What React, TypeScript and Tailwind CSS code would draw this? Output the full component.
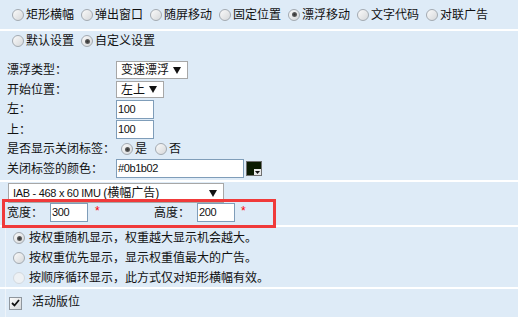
const font = "font-['Liberation_Sans','Noto_Sans_CJK_SC',sans-serif]";

const Radio = ({ checked = false, disabled = false }: { checked?: boolean; disabled?: boolean }) => (
    <span
        className={`inline-flex h-[12px] w-[12px] shrink-0 items-center justify-center rounded-full border ${
            disabled
                ? "border-[#d3d9df] bg-[#eef1f4]"
                : "border-[#a3aab1] bg-linear-to-br from-[#fafafa] to-[#d6d8da]"
        }`}
    >
        {checked && <span className="h-[5px] w-[5px] rounded-full bg-radial from-[#333] to-[#777]" />}
    </span>
);

const Option = ({ label, checked, disabled }: { label: string; checked?: boolean; disabled?: boolean }) => (
    <span className="flex items-center">
        <Radio checked={checked} disabled={disabled} />
        <span className="ml-[2px]">{label}</span>
    </span>
);

const Arrow = () => (
    <svg width="8" height="7" viewBox="0 0 8 7" className="shrink-0">
        <path d="M0 0H8L4 7Z" fill="#111" />
    </svg>
);

const Select = ({ text, width, height }: { text: string; width: string; height: string }) => (
    <div className={`flex items-center justify-between border border-[#a7a7a7] bg-white pl-[4px] pr-[6px] ${width} ${height}`}>
        <span className="whitespace-nowrap">{text}</span>
        <Arrow />
    </div>
);

const TextBox = ({ value, width = "w-[38px]" }: { value: string; width?: string }) => (
    <div className={`flex h-[19px] items-center border border-[#7f9db9] bg-white pl-[1px] text-[11px] tracking-[-0.4px] ${width}`}>
        {value}
    </div>
);

const FormRow = ({ label, h, children }: { label: string; h: string; children: React.ReactNode }) => (
    <div className={`flex items-center ${h}`}>
        <span className="w-[109px] shrink-0">{label}</span>
        {children}
    </div>
);

const types = ["矩形横幅", "弹出窗口", "随屏移动", "固定位置", "漂浮移动", "文字代码", "对联广告"];

export default function App() {
    return (
        <div className={`flex h-[319px] w-[518px] flex-col gap-[2px] bg-white text-[12px] leading-none text-[#111] ${font}`}>
            {/* ad type */}
            <div className="flex h-[29px] shrink-0 items-center gap-[7px] bg-[#deebf7] pl-[12px]">
                {types.map((t) => (
                    <Option key={t} label={t} checked={t === "漂浮移动"} />
                ))}
            </div>

            {/* settings */}
            <div className="flex h-[149px] shrink-0 flex-col bg-[#deebf7]">
                <div className="flex h-[20px] items-center gap-[7px] pl-[12px]">
                    <Option label="默认设置" />
                    <Option label="自定义设置" checked />
                </div>
                <div className="mt-[9px] flex flex-col pl-[7px]">
                    <FormRow label="漂浮类型：" h="h-[20px]">
                        <Select text="变速漂浮" width="w-[72px]" height="h-[18px]" />
                    </FormRow>
                    <FormRow label="开始位置：" h="h-[19px]">
                        <Select text="左上" width="w-[48px]" height="h-[17px]" />
                    </FormRow>
                    <FormRow label="左：" h="h-[20px]">
                        <TextBox value="100" />
                    </FormRow>
                    <FormRow label="上：" h="h-[21px]">
                        <TextBox value="100" />
                    </FormRow>
                    <FormRow label="是否显示关闭标签：" h="h-[18px]">
                        <span className="ml-[5px] flex items-center gap-[8px]">
                            <Option label="是" checked />
                            <Option label="否" />
                        </span>
                    </FormRow>
                    <FormRow label="关闭标签的颜色：" h="h-[21px]">
                        <TextBox value="#0b1b02" width="w-[128px]" />
                        <div className="relative ml-[2px] h-[15px] w-[16px] border border-[#707070] bg-[#0b1b02]">
                            <div className="absolute bottom-0 right-0 flex h-[6px] w-[7px] items-center justify-center bg-[#e8e8e8]">
                                <svg width="5" height="3" viewBox="0 0 5 3">
                                    <path d="M0 0H5L2.5 3Z" fill="#111" />
                                </svg>
                            </div>
                        </div>
                    </FormRow>
                </div>
            </div>

            {/* size */}
            <div className="relative flex h-[43px] shrink-0 flex-col bg-[#deebf7] pl-[8px] pt-[1px]">
                <div className="flex h-[20px] w-[216px] items-center justify-between border border-[#a7a7a7] bg-white pl-[4px] pr-[6px]">
                    <span className="whitespace-nowrap">
                        <span className="text-[11px] tracking-[-0.3px]">IAB - 468 x 60 IMU </span>(横幅广告)
                    </span>
                    <Arrow />
                </div>
                <div className="flex h-[19px] items-center">
                    <span className="-ml-[1px] w-[43px]">宽度：</span>
                    <TextBox value="300" />
                    <span className="ml-[7px] -mt-[3px] w-[59px] text-[#f00]">*</span>
                    <span className="w-[43px]">高度：</span>
                    <TextBox value="200" />
                    <span className="ml-[6px] -mt-[3px] text-[#f00]">*</span>
                </div>
                <div className="pointer-events-none absolute left-[2px] top-[17px] h-[29px] w-[274px] border-[3px] border-[#f03a3a]" />
            </div>

            {/* display mode */}
            <div className="flex h-[60px] shrink-0 bg-[#deebf7]">
                <div className="ml-[5px] flex flex-1 flex-col border-l border-[#eef4fa] pl-[7px] pt-[1px]">
                    <div className="flex h-[20px] items-center">
                        <Radio checked />
                        <span className="ml-[4px]">按权重随机显示，权重越大显示机会越大。</span>
                    </div>
                    <div className="flex h-[20px] items-center">
                        <Radio />
                        <span className="ml-[4px]">按权重优先显示，显示权重值最大的广告。</span>
                    </div>
                    <div className="flex h-[19px] items-center">
                        <Radio disabled />
                        <span className="ml-[4px]">按顺序循环显示，此方式仅对矩形横幅有效。</span>
                    </div>
                </div>
            </div>

            {/* active */}
            <div className="flex h-[28px] shrink-0 bg-[#deebf7]">
                <div className="ml-[5px] flex flex-1 items-center border-l border-[#eef4fa] pl-[3px]">
                    <span className="flex h-[13px] w-[13px] items-center justify-center border border-[#8f969d] bg-linear-to-br from-[#fbfbfb] to-[#d6d8da]">
                        <svg width="9" height="8" viewBox="0 0 9 8">
                            <path d="M1 4L3.5 6.5L8 1" stroke="#111" strokeWidth="1.8" fill="none" />
                        </svg>
                    </span>
                    <span className="ml-[10px] -mt-[3px]">活动版位</span>
                </div>
            </div>
        </div>
    );
}
